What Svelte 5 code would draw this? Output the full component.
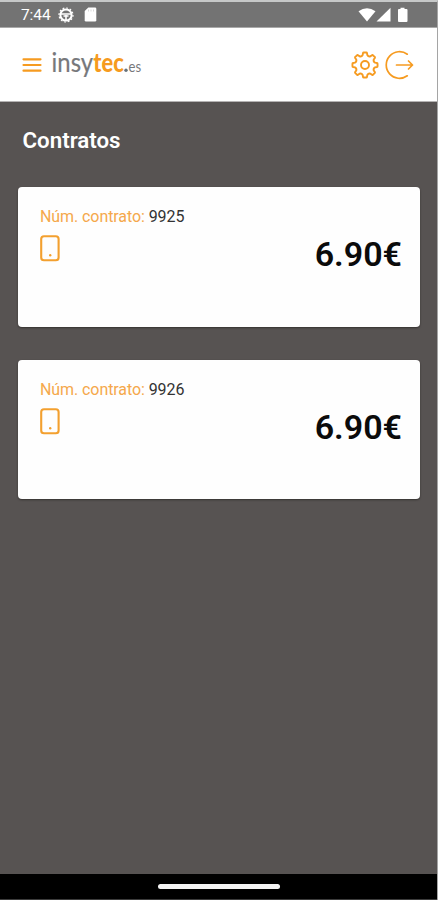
<script>
  const contracts = [
    { id: '9925', price: '6.90€' },
    { id: '9926', price: '6.90€' }
  ];

  // Outline of an eight-toothed cog centred on the origin
  function cog(teeth, outer, inner) {
    const step = 360 / teeth;
    const pt = (r, deg) => {
      const a = (deg * Math.PI) / 180;
      return `${(r * Math.cos(a)).toFixed(2)} ${(r * Math.sin(a)).toFixed(2)}`;
    };
    let d = '';
    for (let i = 0; i < teeth; i++) {
      const a = i * step - 90;
      d += `${i ? 'L' : 'M'}${pt(inner + 0.6, a - 13)} L${pt(outer - 0.5, a - 9.5)} Q${pt(outer + 0.2, a - 8)} ${pt(outer, a - 5)} L${pt(outer, a + 5)} Q${pt(outer + 0.2, a + 8)} ${pt(outer - 0.5, a + 9.5)} L${pt(inner + 0.6, a + 13)} Q${pt(inner - 0.9, a + 22.5)} ${pt(inner + 0.6, a + step - 13)} `;
    }
    return d + 'Z';
  }
  const cogPath = cog(8, 12.6, 9.7);
</script>

<div class="screen">
  <div class="status">
    <span class="time">7:44</span>
    <svg class="wheel" width="16" height="16" viewBox="0 0 16 16" fill="none" stroke="#fff">
      <circle cx="8" cy="8" r="5.6" stroke-width="2" />
      <circle cx="8" cy="8" r="7" stroke-width="1.2" stroke-dasharray="1.8 1.86" />
      <path d="M3 7h10M8 8v5M5.5 9h5" stroke-width="1.6" />
    </svg>
    <svg class="sd" width="13" height="15" viewBox="0 0 13 15">
      <path d="M4.3 .5H11q1.3 0 1.3 1.3v11.4q0 1.3-1.3 1.3H2Q.7 14.5 .7 13.2V4z" fill="#fff" />
      <path d="M4.5 2.5v2M7 2.5v2M9.5 2.5v2" stroke="#dadada" />
    </svg>
    <span class="grow"></span>
    <svg width="50" height="16" viewBox="0 0 50 16" fill="#fff">
      <path d="M.5 4.3Q9 -1.8 17.5 4.3L9 14.5z" />
      <path d="M18.5 14.5L32.5 .7V14.5z" />
      <path d="M40.5 2h2V.8h4V2h2q1 0 1 1v11q0 1-1 1h-7.5q-1 0-1-1V3z" />
    </svg>
  </div>

  <header>
    <svg class="menu" width="20" height="16" viewBox="0 0 20 16" stroke="#f69b20" stroke-width="2.2" stroke-linecap="round">
      <path d="M1.5 2.3h17M1.5 8h17M1.5 13.7h17" />
    </svg>
    <svg class="logo" width="92" height="34" viewBox="0 0 92 34">
      <text x="0.6" y="24" font-size="26" fill="#77787b" stroke="#77787b" stroke-width=".2" textLength="41.5" lengthAdjust="spacingAndGlyphs">insy</text>
      <text x="42.3" y="24" font-size="26" font-weight="900" fill="#f69b20" textLength="30.4" lengthAdjust="spacingAndGlyphs">tec</text>
      <circle cx="75" cy="22.2" r="1.7" fill="#66737b" />
      <text x="77.6" y="24" font-size="14.5" fill="#77787b" textLength="12.6" lengthAdjust="spacingAndGlyphs">es</text>
    </svg>
    <span class="grow"></span>
    <svg width="28" height="28" viewBox="-14 -14 28 28" fill="none" stroke="#f69b20" stroke-width="1.9" stroke-linejoin="round">
      <path d={cogPath} />
      <circle r="4" />
    </svg>
    <svg class="exit" width="30" height="30" viewBox="0 0 30 30" fill="none" stroke="#f69b20" stroke-width="1.7" stroke-linecap="round" stroke-linejoin="round">
      <path d="M22.3 4.2A13.3 13.3 0 1 0 22.3 25.8" />
      <path d="M11.5 15H27.5M23.5 11l4 4-4 4" />
    </svg>
  </header>

  <main>
    <h1>Contratos</h1>
    {#each contracts as c}
      <article>
        <div>
          <p><span>Núm. contrato:</span> {c.id}</p>
          <svg width="20" height="27" viewBox="0 0 20 27">
            <rect x="1.2" y="1.2" width="17.4" height="24" rx="2.8" fill="none" stroke="#f3a02f" stroke-width="2.1" />
            <circle cx="10.2" cy="20.3" r="1.2" fill="#f3a02f" />
          </svg>
        </div>
        <strong>{c.price}</strong>
      </article>
    {/each}
  </main>

  <footer><i></i></footer>
</div>

<style>
  .screen {
    box-sizing: border-box;
    width: 438px;
    height: 900px;
    display: flex;
    flex-direction: column;
    border-top: 2px solid #c6c8c8;
    border-right: 1px solid #a5a5a5;
    background: #575352;
    font-family: Roboto, sans-serif;
    overflow: hidden;
  }
  svg { display: block; flex: none; }
  .grow { flex: 1; }
  .status {
    box-sizing: border-box;
    height: 26px;
    background: #737373;
    border-bottom: 1px solid #a9a9a9;
    display: flex;
    align-items: center;
    padding: 0 29px 0 21px;
    color: #fff;
  }
  .time { width: 31px; font-size: 15.5px; line-height: 24px; white-space: nowrap; letter-spacing: -.1px; }
  .wheel { margin-left: 6px; }
  .sd { margin-left: 10px; }
  header {
    box-sizing: border-box;
    height: 74px;
    background: #fff;
    border-bottom: 1px solid #b5b3b3;
    display: flex;
    align-items: center;
    padding: 0 22px 0 22px;
  }
  .logo { margin-left: 9px; font-family: Lato, sans-serif; overflow: visible; }
  .exit { margin-left: 6px; }
  main { flex: 1; padding: 0 17px 0 18px; }
  h1 {
    margin: 23px 0 32px 4.5px;
    font-size: 22.3px;
    line-height: 30px;
    font-weight: 600;
    color: #fff;
  }
  article {
    box-sizing: border-box;
    height: 139.5px;
    margin-bottom: 33px;
    padding: 19px 18px 0 22px;
    background: #fefefe;
    border-radius: 4px;
    box-shadow: 0 1px 2px #343130;
    display: flex;
    justify-content: space-between;
  }
  p { margin: 0 0 8px; font-size: 16px; line-height: 21px; color: #333; white-space: nowrap; letter-spacing: -.08px; }
  p span { color: #f5a84b; }
  strong { margin-top: 26px; height: 44px; font-size: 34px; line-height: 44px; font-weight: 600; color: #0b0b0b; letter-spacing: 0; }
  footer {
    box-sizing: border-box;
    height: 26px;
    background: #000;
    border-bottom: 1px solid #3c3c3c;
    display: flex;
    justify-content: center;
    align-items: center;
  }
  footer i { width: 122px; height: 5px; border-radius: 3px; background: #f4f4f4; }
</style>
